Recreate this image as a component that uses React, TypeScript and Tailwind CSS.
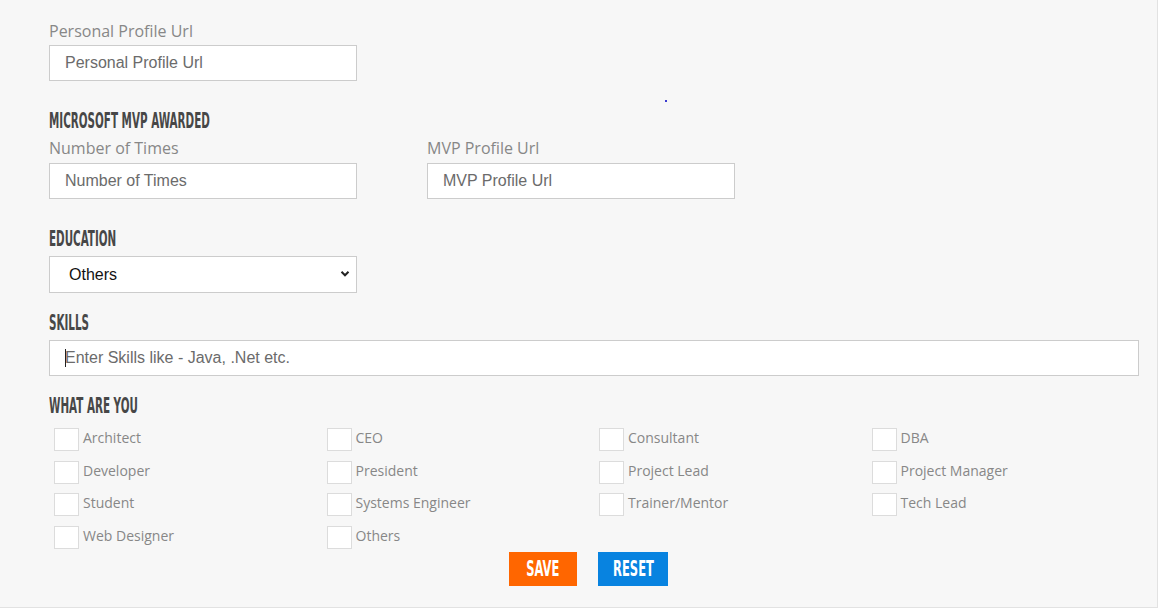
import React from "react";

function Heading({ children, className = "" }: { children: React.ReactNode; className?: string }) {
  return (
    <div className={className}>
      <span className="inline-block origin-top-left scale-x-[0.72] scale-y-[1.28] text-[16px] leading-[16px] font-bold text-[#474747] [font-family:'Liberation_Sans_Narrow','DejaVu_Sans_Condensed',sans-serif]">
        {children}
      </span>
    </div>
  );
}

function Label({ children }: { children: React.ReactNode }) {
  return (
    <div className="text-[16px] leading-[22px] text-[#878787] [font-family:'Open_Sans',sans-serif]">{children}</div>
  );
}

function TextInput({ placeholder, className = "" }: { placeholder: string; className?: string }) {
  return (
    <input
      type="text"
      placeholder={placeholder}
      className={
        "block h-[36px] border border-[#cccccc] bg-white px-[15px] text-[16px] text-[#555] placeholder:text-[#6b6b6b] outline-none [font-family:'Liberation_Sans',Arial,sans-serif] " +
        className
      }
    />
  );
}

const options = [
  ["Architect", "CEO", "Consultant", "DBA"],
  ["Developer", "President", "Project Lead", "Project Manager"],
  ["Student", "Systems Engineer", "Trainer/Mentor", "Tech Lead"],
  ["Web Designer", "Others", "", ""],
];

const btnText =
  "inline-block origin-center scale-x-[0.8] scale-y-[1.28] text-[16px] font-bold [font-family:'Liberation_Sans_Narrow','DejaVu_Sans_Condensed',sans-serif]";

export default function App() {
  return (
    <div className="w-full h-[615px] bg-white">
      <div className="w-[1158px] h-[608px] bg-[#f7f7f7] border-r border-b border-[#e2e2e2] pl-[49px] pt-[20px] relative">
        <span className="absolute left-[665px] top-[100px] w-[2px] h-[2px] bg-[#3b3bd0]" />
        <Label>Personal Profile Url</Label>
        <TextInput placeholder="Personal Profile Url" className="mt-[3px] w-[308px]" />

        <Heading className="mt-[25px]">MICROSOFT MVP AWARDED</Heading>
        <div className="mt-[7px] flex gap-[70px]">
          <div>
            <Label>Number of Times</Label>
            <TextInput placeholder="Number of Times" className="mt-[4px] w-[308px]" />
          </div>
          <div>
            <Label>MVP Profile Url</Label>
            <TextInput placeholder="MVP Profile Url" className="mt-[4px] w-[308px]" />
          </div>
        </div>

        <Heading className="mt-[25px]">EDUCATION</Heading>
        <div className="mt-[8px] relative w-[308px] h-[37px] border border-[#cccccc] bg-white">
          <div className="pl-[19px] leading-[35px] text-[16px] text-[#111] [font-family:'Liberation_Sans',Arial,sans-serif]">Others</div>
          <svg className="absolute right-[6px] top-[13px]" width="10" height="8" viewBox="0 0 10 8">
            <path d="M1.5 1.8 L5 5.3 L8.5 1.8" fill="none" stroke="#222" strokeWidth="2" />
          </svg>
        </div>

        <Heading className="mt-[15px]">SKILLS</Heading>
        <div className="mt-[8px] relative w-[1090px] h-[36px] border border-[#cccccc] bg-white">
          <div className="pl-[15px] leading-[34px] text-[16px] text-[#6b6b6b] [font-family:'Liberation_Sans',Arial,sans-serif]">
            <span className="inline-block w-[1px] h-[18px] bg-[#222] align-middle mr-[-1px] relative top-[-1px]" />
            Enter Skills like - Java, .Net etc.
          </div>
        </div>

        <Heading className="mt-[15px]">WHAT ARE YOU</Heading>
        <div className="mt-[13px] w-[1090px] flex flex-col">
          {options.map((row, i) => (
            <div key={i} className="grid grid-cols-4 h-[32.5px]">
              {row.map((opt, j) => (
                <div key={j} className="pl-[5px] flex items-start">
                  {opt && (
                    <>
                      <span className="block w-[25px] h-[23px] border border-[#dcdcdc] bg-white" />
                      <span className="ml-[4px] text-[14px] leading-[20px] text-[#878787] [font-family:'Open_Sans',sans-serif]">{opt}</span>
                    </>
                  )}
                </div>
              ))}
            </div>
          ))}
        </div>

        <div className="flex gap-[21px] pl-[460px] mt-[-6px]">
          <button className="w-[68px] h-[34px] bg-[#ff6600] text-white">
            <span className={btnText}>SAVE</span>
          </button>
          <button className="w-[70px] h-[34px] bg-[#0883e0] text-white">
            <span className={btnText}>RESET</span>
          </button>
        </div>
      </div>
    </div>
  );
}
